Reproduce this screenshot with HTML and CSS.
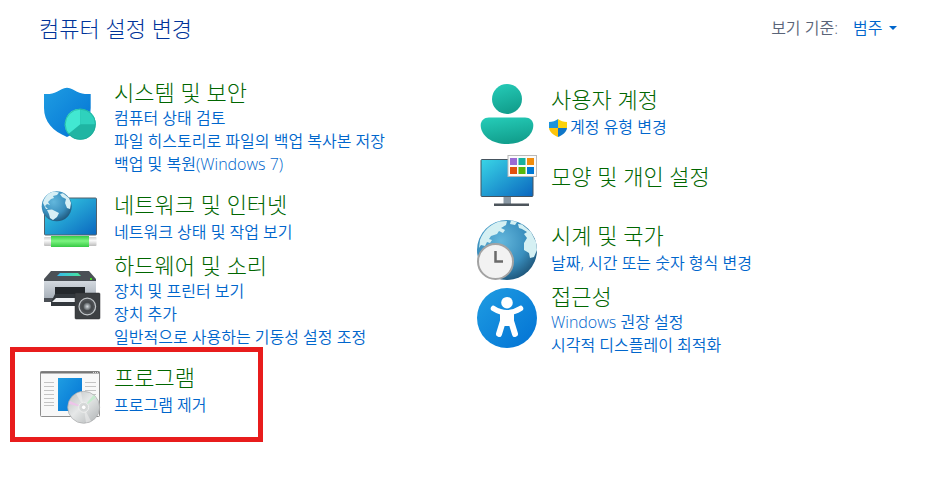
FILE: index.html
```
<!DOCTYPE html>
<html lang="ko">

<head>
  <meta charset="UTF-8">
  <meta name="viewport" content="width=device-width, initial-scale=1">
  <title>제어판</title>
  <link rel="stylesheet" href="styles.css">
</head>

<body>

  <header class="header">
    <h1>컴퓨터 설정 변경</h1>
    <div class="view-by">
      <label for="view">보기 기준:</label>
      <span class="view-select">
        <select id="view" name="view">
          <option>범주</option>
        </select>
      </span>
    </div>
  </header>

  <main class="categories">
    <div class="column">

      <section class="category">
        <svg class="icon" viewBox="0 0 60 60" aria-hidden="true">
          <defs>
            <linearGradient id="blue" x1="0" y1="0" x2="1" y2="1">
              <stop offset="0" stop-color="#1f9de2" />
              <stop offset="1" stop-color="#0272d4" />
            </linearGradient>
            <linearGradient id="screen" x1="0" y1="0" x2="1" y2="1">
              <stop offset="0" stop-color="#39d5e6" />
              <stop offset="1" stop-color="#0a66bf" />
            </linearGradient>
            <linearGradient id="teal" x1="0" y1="0" x2="0.3" y2="1">
              <stop offset="0" stop-color="#26cdb9" />
              <stop offset="1" stop-color="#12a08e" />
            </linearGradient>
            <radialGradient id="ocean" cx="0.4" cy="0.35" r="0.7">
              <stop offset="0" stop-color="#63b7dc" />
              <stop offset="0.6" stop-color="#3a8fbe" />
              <stop offset="1" stop-color="#1d5478" />
            </radialGradient>
          </defs>
          <path d="M27 3.7C23 3.7 20 6 17 7.8C13 10 9 10.3 4 10V24C4 38 13 47 27 53C41 47 50.7 38 50.7 24V10C46 10.3 41 10 37 7.8C34 6 31 3.7 27 3.7Z" fill="url(#blue)" />
          <circle cx="40.3" cy="40.3" r="15.5" fill="#1fb5a3" />
          <path d="M40.3 40.3V24.8A15.5 15.5 0 0 0 28.3 50.1Z" fill="#42e8d2" />
          <path d="M40.3 40.3V24.8A15.5 15.5 0 0 1 55.8 40.3Z" fill="#2fd1bd" />
          <circle cx="40.3" cy="40.3" r="15.1" fill="none" stroke="#1ba795" stroke-opacity="0.6" />
        </svg>
        <div class="info">
          <h2><a href="#">시스템 및 보안</a></h2>
          <ul>
            <li><a href="#">컴퓨터 상태 검토</a></li>
            <li><a href="#">파일 히스토리로 파일의 백업 복사본 저장</a></li>
            <li><a href="#">백업 및 복원(Windows 7)</a></li>
          </ul>
        </div>
      </section>

      <section class="category single">
        <svg class="icon" viewBox="0 0 60 60" aria-hidden="true">
          <defs>
            <linearGradient id="cable" x1="0" y1="0" x2="0" y2="1">
              <stop offset="0" stop-color="#35cc47" />
              <stop offset="0.45" stop-color="#7df481" />
              <stop offset="1" stop-color="#36c944" />
            </linearGradient>
            <linearGradient id="plug" x1="0" y1="0" x2="0" y2="1">
              <stop offset="0" stop-color="#cfcfcf" />
              <stop offset="0.4" stop-color="#fafafa" />
              <stop offset="1" stop-color="#bcbcbc" />
            </linearGradient>
          </defs>
          <rect x="4.5" y="9" width="52" height="37" rx="1" fill="url(#screen)" stroke="#52606b" />
          <rect x="4" y="48" width="52.5" height="9" rx="1" fill="url(#plug)" />
          <rect x="11" y="47" width="38" height="11" fill="url(#cable)" />
          <circle cx="16.7" cy="17.3" r="15" fill="url(#ocean)" />
          <path d="M3 14C4 8 9 3 14 2.4L19 3.5L17 6L13 7L14 9L11 10L8 13L10 16L7 15L5 17L8 20L6 20Z M7 21L12 20.5L19 24L17 28L13 31L10 29L9 25Z M20 5L23 4.2L29 9L31 14L30 20L27 19L25 14L26 10L22 8Z" fill="#d7eff5" />
        </svg>
        <div class="info">
          <h2><a href="#">네트워크 및 인터넷</a></h2>
          <ul>
            <li><a href="#">네트워크 상태 및 작업 보기</a></li>
          </ul>
        </div>
      </section>

      <section class="category">
        <svg class="icon" viewBox="0 0 60 60" aria-hidden="true">
          <defs>
            <linearGradient id="strip" x1="0" y1="0" x2="1" y2="0">
              <stop offset="0" stop-color="#35b8ee" />
              <stop offset="1" stop-color="#48e79b" />
            </linearGradient>
            <linearGradient id="shell" x1="0" y1="0" x2="0" y2="1">
              <stop offset="0" stop-color="#d3d9df" />
              <stop offset="1" stop-color="#a9b1ba" />
            </linearGradient>
            <radialGradient id="cone">
              <stop offset="0" stop-color="#d6dbdf" />
              <stop offset="1" stop-color="#5b6064" />
            </radialGradient>
          </defs>
          <path d="M4 22L11 14H49L56 22V45H4Z" fill="#4b5056" />
          <path d="M4 24H56V41H4Z" fill="url(#shell)" />
          <path d="M20 16H38L41 19H17Z" fill="url(#strip)" />
          <rect x="50" y="21" width="2" height="2" fill="#46dc28" />
          <rect x="15" y="30" width="30" height="11" fill="#24282c" />
          <path d="M15 37H45V49H11V45Z" fill="#33383d" />
          <path d="M16 41H44V45H12Z" fill="#eef1f4" />
          <rect x="35" y="36" width="25" height="26" rx="1" fill="#3d4043" stroke="#2c2e30" stroke-width="0.5" />
          <circle cx="47.3" cy="49.5" r="8.3" fill="#505357" stroke="#c1c5c8" stroke-width="1.2" />
          <circle cx="47.3" cy="49.5" r="6" fill="#46494c" />
          <circle cx="47.3" cy="49.5" r="3.8" fill="url(#cone)" />
        </svg>
        <div class="info">
          <h2><a href="#">하드웨어 및 소리</a></h2>
          <ul>
            <li><a href="#">장치 및 프린터 보기</a></li>
            <li><a href="#">장치 추가</a></li>
            <li><a href="#">일반적으로 사용하는 기동성 설정 조정</a></li>
          </ul>
        </div>
      </section>

      <section class="category single highlight">
        <svg class="icon" viewBox="0 0 60 60" aria-hidden="true">
          <defs>
            <linearGradient id="disc" x1="0" y1="0" x2="1" y2="1">
              <stop offset="0" stop-color="#b9bdbe" />
              <stop offset="0.45" stop-color="#e6e8e8" />
              <stop offset="1" stop-color="#aeb2b3" />
            </linearGradient>
          </defs>
          <rect x="0.5" y="9.5" width="59" height="45" rx="1" fill="#f8f8f8" stroke="#8e8e8e" />
          <path d="M0.5 10.5H59.5" stroke="#777" stroke-width="2" />
          <path d="M53 10.5H58" stroke="#ddd" stroke-dasharray="1 1" />
          <path d="M4 20.5H14M4 24.5H14M4 28.5H14M4 32.5H14M4 36.5H14M4 40.5H14M4 43.5H14M45 20.5H56M45 24.5H56M45 28.5H56M45 32.5H56" stroke="#c4c4c4" />
          <rect x="18" y="16" width="24" height="33" fill="url(#blue)" />
          <circle cx="43.7" cy="45.3" r="16" fill="url(#disc)" stroke="#a7a9aa" stroke-width="0.7" />
          <path d="M43.7 45.3L28.6 42L30 39Z" fill="#eec4ea" />
          <path d="M43.7 45.3L53.5 33L56 35.5Z" fill="#c6ebcf" />
          <path d="M43.7 45.3L36 31.8L41 29.8Z M43.7 45.3L51 59L46 60.8Z" fill="#f4f4f4" fill-opacity="0.5" />
          <circle cx="43.7" cy="45.3" r="5" fill="#d6d9d9" stroke="#f3f3f3" stroke-width="0.8" />
          <circle cx="43.7" cy="45.3" r="2.3" fill="#fff" stroke="#c4c6c6" stroke-width="0.6" />
        </svg>
        <div class="info">
          <h2><a href="#">프로그램</a></h2>
          <ul>
            <li><a href="#">프로그램 제거</a></li>
          </ul>
        </div>
      </section>

    </div>

    <div class="column">

      <section class="category single">
        <svg class="icon" viewBox="0 0 60 60" aria-hidden="true">
          <circle cx="30" cy="15" r="15" fill="url(#teal)" />
          <path d="M12 33.5H48C53 33.5 56.3 37 56.3 41C56.3 52 45 60 30 60S3.7 52 3.7 41C3.7 37 7 33.5 12 33.5Z" fill="url(#teal)" />
        </svg>
        <div class="info">
          <h2><a href="#">사용자 계정</a></h2>
          <ul>
            <li class="admin">
              <svg class="shield" viewBox="0 0 18 18" aria-hidden="true">
                <path d="M9 0C6.5 2 3.5 2.8 0 3V9H9Z" fill="#1c93dc" />
                <path d="M9 0C11.5 2 14.5 2.8 18 3V9H9Z" fill="#fcd20b" />
                <path d="M0 9H9V18C4 16 0.5 13 0 9Z" fill="#fcc40b" />
                <path d="M18 9H9V18C14 16 17.5 13 18 9Z" fill="#0f76c8" />
              </svg>
              <a href="#">계정 유형 변경</a>
            </li>
          </ul>
        </div>
      </section>

      <section class="category">
        <svg class="icon" viewBox="0 0 60 60" aria-hidden="true">
          <rect x="26.5" y="45" width="7.5" height="7" fill="#8b99a5" />
          <rect x="17" y="51.5" width="35" height="2.5" fill="#4d555c" />
          <rect x="4" y="7.5" width="52" height="37" rx="1" fill="url(#screen)" stroke="#45535e" />
          <rect x="31" y="3.5" width="28.5" height="21" fill="#fbfbfb" stroke="#b9b9b9" />
          <rect x="33" y="6" width="7" height="7" fill="#9a6bd4" />
          <rect x="41.5" y="6" width="7" height="7" fill="#18b09f" />
          <rect x="50" y="6" width="7" height="7" fill="#f08c0c" />
          <rect x="33" y="15" width="7" height="7" fill="#e2500f" />
          <rect x="41.5" y="15" width="7" height="7" fill="#57b70c" />
          <rect x="50" y="15" width="7" height="7" fill="#0078d4" />
        </svg>
        <div class="info">
          <h2><a href="#">모양 및 개인 설정</a></h2>
        </div>
      </section>

      <section class="category single">
        <svg class="icon" viewBox="0 0 60 60" aria-hidden="true">
          <circle cx="30" cy="30" r="30" fill="url(#ocean)" />
          <path d="M3 20C6 12 12 5 22 1.5L30 1L29 5L24 8L28 10L26 13L22 11L20 14L14 16L12 19L15 20L13 23L10 22L8 26L4 25L2 28Z M34 0.5L40 2L38 5L33 4Z M41 4L45 4.5L54 12L59 22L60 30L57 37L53 38L52 33L47 30L47 23L50 18L47 14L50 12L45 9L42 8Z" fill="#d5f0f3" />
          <circle cx="18.5" cy="41.5" r="17.5" fill="#f2f2f2" stroke="#a3a3a3" stroke-width="2" />
          <path d="M18.5 31V41.5H26" fill="none" stroke="#6a6a6a" stroke-width="2.5" />
        </svg>
        <div class="info">
          <h2><a href="#">시계 및 국가</a></h2>
          <ul>
            <li><a href="#">날짜, 시간 또는 숫자 형식 변경</a></li>
          </ul>
        </div>
      </section>

      <section class="category">
        <svg class="icon" viewBox="0 0 60 60" aria-hidden="true">
          <circle cx="30" cy="30" r="30" fill="url(#blue)" />
          <circle cx="30" cy="14.7" r="5.8" fill="#fff" />
          <path d="M16.5 20.5Q30 29 43.5 20.5" fill="none" stroke="#fff" stroke-width="5.5" stroke-linecap="round" />
          <path d="M23 23H37V35H23Z" fill="#fff" />
          <path d="M26 33L22 46M34 33L38 46" stroke="#fff" stroke-width="6" stroke-linecap="round" />
          <path d="M24 32H36L33 38H27Z" fill="#fff" />
        </svg>
        <div class="info">
          <h2><a href="#">접근성</a></h2>
          <ul>
            <li><a href="#">Windows 권장 설정</a></li>
            <li><a href="#">시각적 디스플레이 최적화</a></li>
          </ul>
        </div>
      </section>

    </div>
  </main>

</body>

</html>
```
FILE: styles.css
```
body {
  margin: 0;
  background-color: #fff;
  font-family: "Open Sans", "Noto Sans CJK KR", sans-serif;
  font-size: 16px;
  font-weight: 350;
  line-height: 23px;
}

a {
  color: #0066cc;
  text-decoration: none;
}

a:hover {
  text-decoration: underline;
}

h1,
h2 {
  margin: 0;
  font-size: 22px;
  font-weight: 300;
}

h1 {
  color: #003399;
  line-height: 28px;
}

h2 {
  margin: -3px 0 4px;
  line-height: 22px;
}

h2 a {
  color: #006600;
}

ul {
  margin: 0;
  padding: 0;
  list-style: none;
}

.header {
  display: flex;
  justify-content: space-between;
  align-items: center;
  padding: 14px 50px 42px 39px;
}

.view-by {
  display: flex;
  gap: 15px;
  color: #5a6478;
}

.view-select {
  display: flex;
  align-items: center;
  gap: 6px;
}

/* seta do select */
.view-select::after {
  content: "";
  border: 4px solid transparent;
  border-top-color: #0066cc;
  border-bottom: 0;
}

select {
  appearance: none;
  padding: 0;
  border: none;
  background: none;
  color: #0066cc;
  font: inherit;
  cursor: pointer;
}

.categories {
  display: grid;
  grid-template-columns: 1fr 1fr;
  padding: 0 33px 40px 40px;
}

.column {
  display: flex;
  flex-direction: column;
  gap: 8px;
}

.category {
  position: relative;
  display: flex;
  gap: 14px;
}

.icon {
  flex: none;
  width: 60px;
  height: 60px;
  overflow: visible;
}

.info {
  display: flex;
  flex-direction: column;
  justify-content: center;
  padding-bottom: 5px;
}

.single .info {
  padding-bottom: 1px;
}

.single h2 {
  margin: 0 0 6px;
}

.admin {
  display: flex;
  align-items: center;
  gap: 3px;
  margin-left: -2px;
}

.shield {
  width: 18px;
  height: 18px;
}

.highlight::before {
  content: "";
  position: absolute;
  top: -15px;
  left: -30px;
  box-sizing: border-box;
  width: 253px;
  height: 95px;
  border: 5px solid #e81c1c;
  pointer-events: none;
}
```
